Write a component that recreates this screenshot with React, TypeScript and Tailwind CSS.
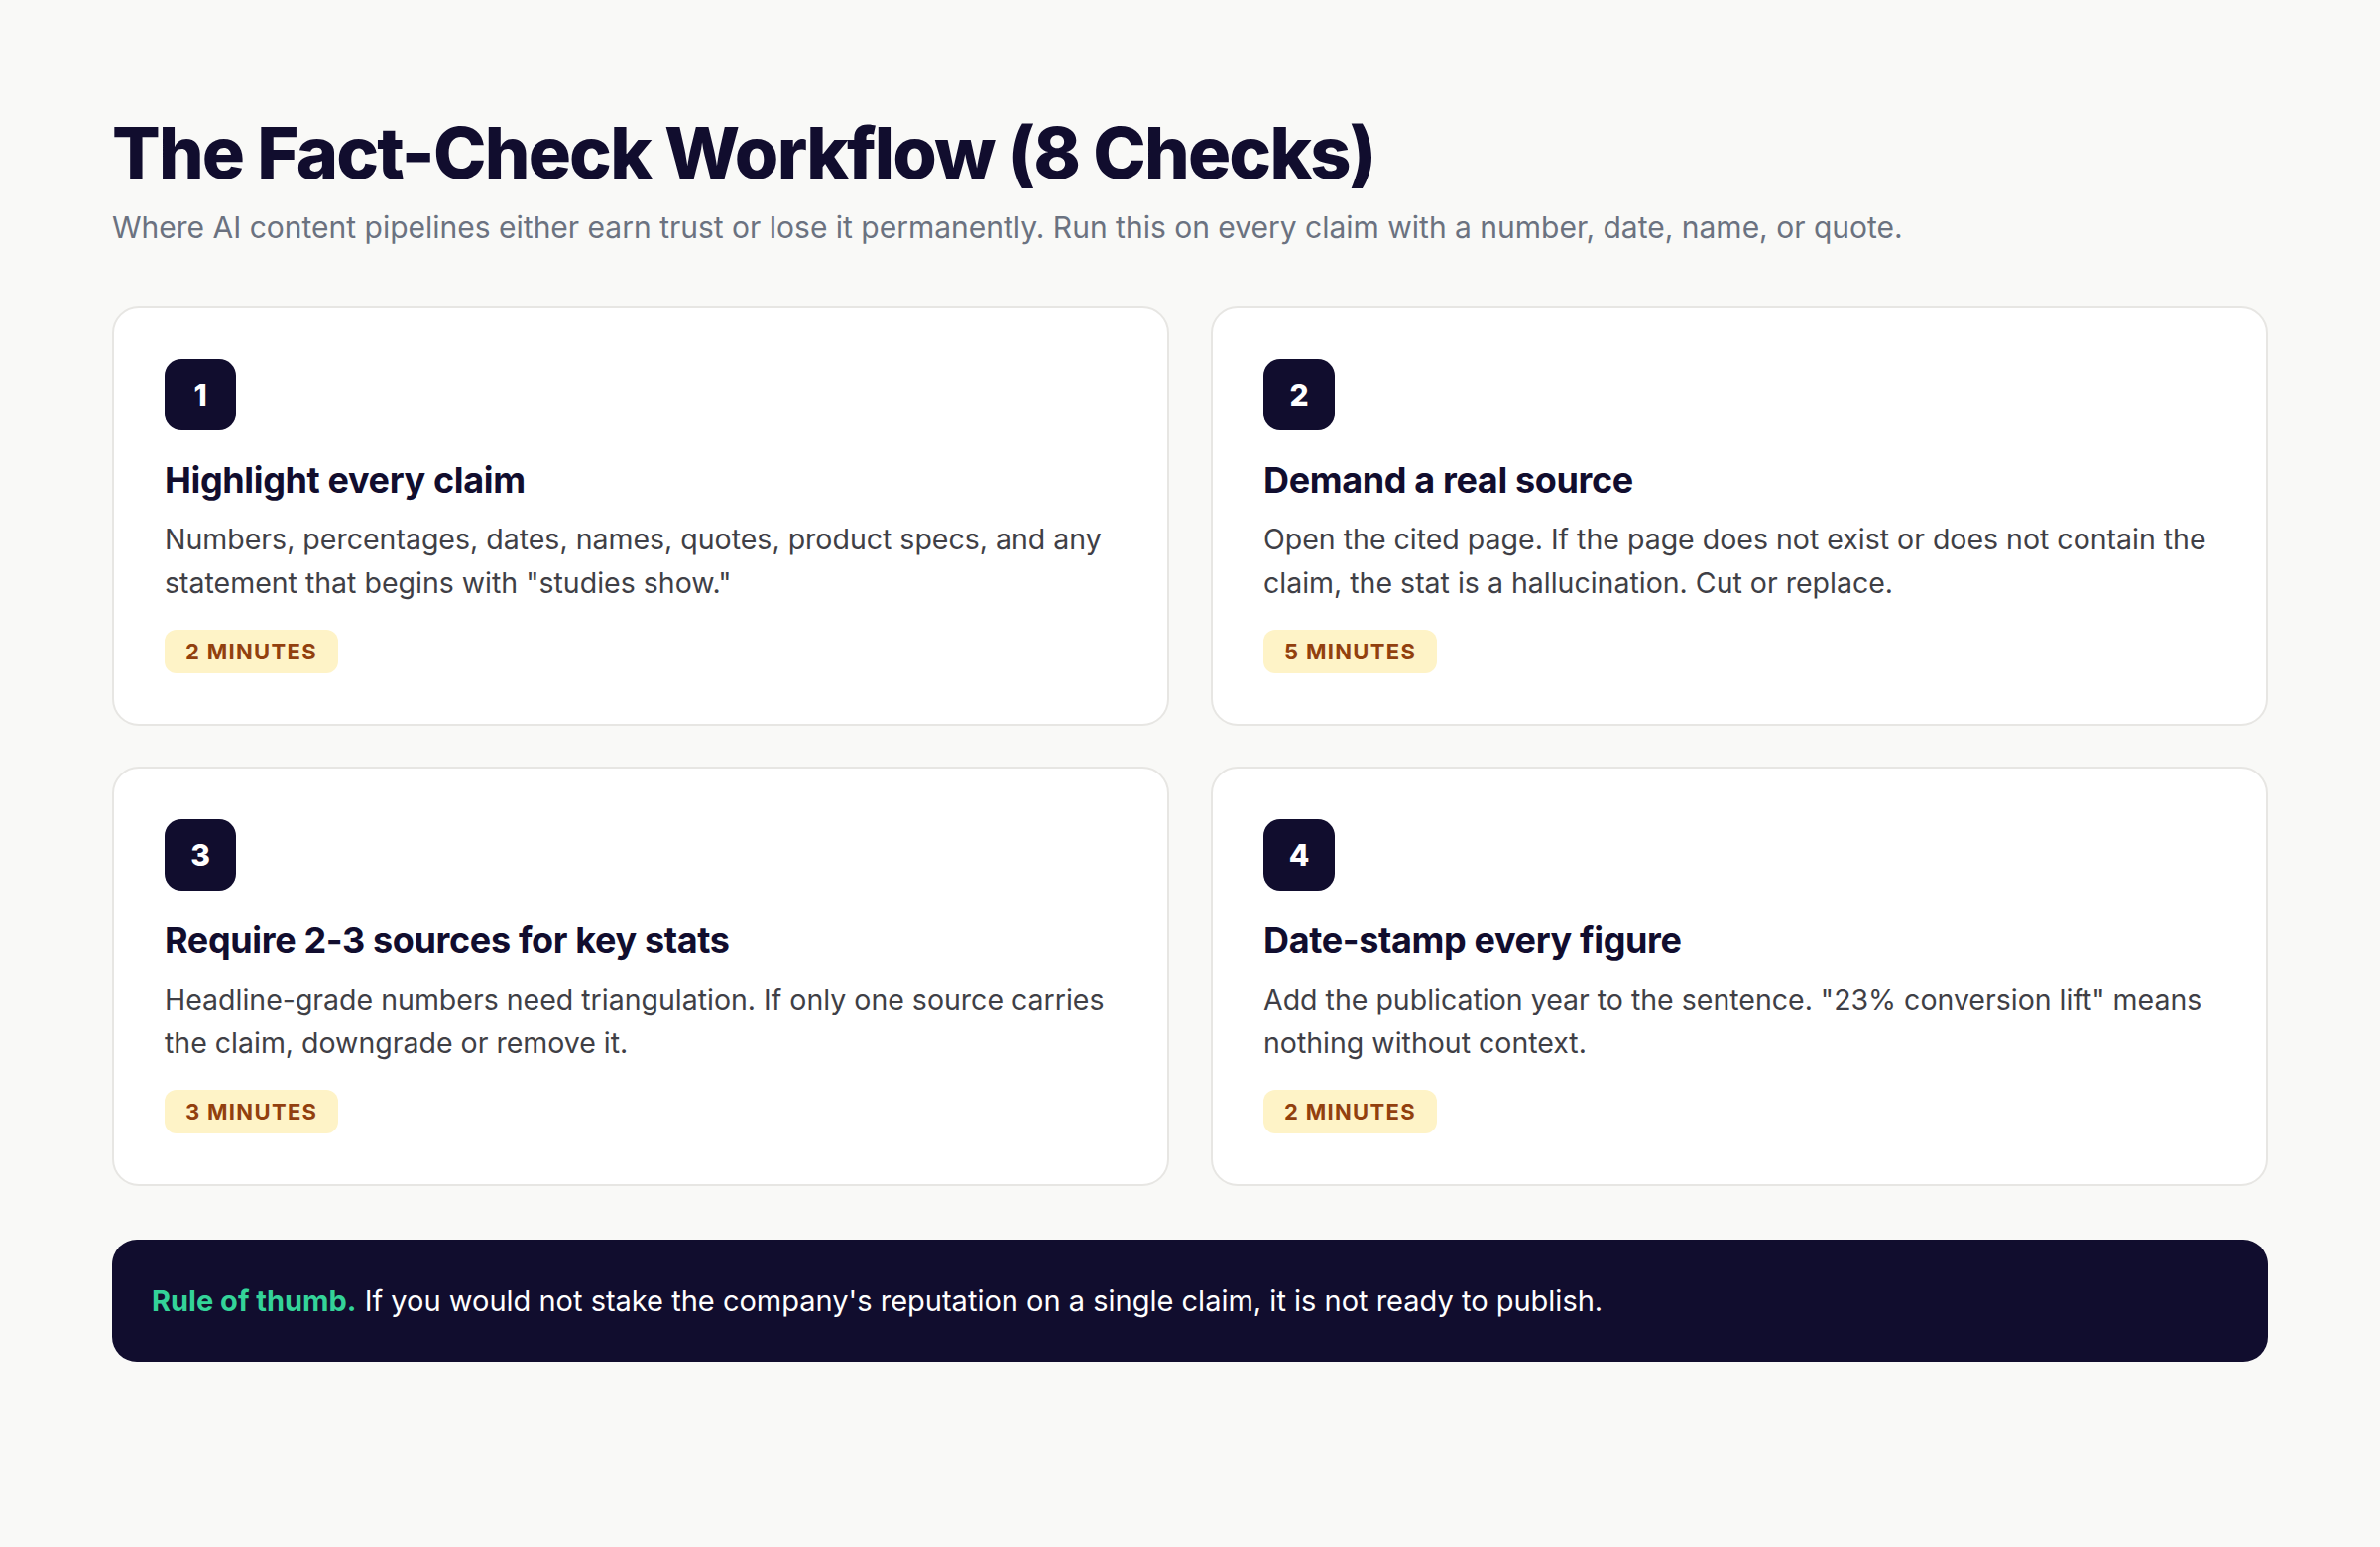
import React from 'react';

const CHECKS = [
  {
    n: '1',
    title: 'Highlight every claim',
    body: 'Numbers, percentages, dates, names, quotes, product specs, and any statement that begins with "studies show."',
    time: '2 MINUTES',
  },
  {
    n: '2',
    title: 'Demand a real source',
    body: 'Open the cited page. If the page does not exist or does not contain the claim, the stat is a hallucination. Cut or replace.',
    time: '5 MINUTES',
  },
  {
    n: '3',
    title: 'Require 2-3 sources for key stats',
    body: 'Headline-grade numbers need triangulation. If only one source carries the claim, downgrade or remove it.',
    time: '3 MINUTES',
  },
  {
    n: '4',
    title: 'Date-stamp every figure',
    body: 'Add the publication year to the sentence. "23% conversion lift" means nothing without context.',
    time: '2 MINUTES',
  },
];

function CheckCard({ n, title, body, time }: { n: string; title: string; body: string; time: string }) {
  return (
    <div className="flex flex-col items-start rounded-[27px] border-2 border-[#e7e6e3] bg-white p-[51px]">
      <div className="flex h-[72px] w-[72px] items-center justify-center rounded-[17px] bg-[#110d2e] text-[30px] font-extrabold text-white">
        {n}
      </div>
      <h2 className="mt-[27px] text-[36px] leading-[47px] font-bold tracking-[-0.01em] text-[#110d2e]">{title}</h2>
      <p className="mt-[14px] text-[28.5px] leading-[44px] text-[#3f3f46]">{body}</p>
      <span className="mt-[25px] flex h-[44px] items-center rounded-[12px] bg-[#fef3c7] px-[21px] text-[22px] font-bold tracking-[0.06em] text-[#92400e]">
        {time}
      </span>
    </div>
  );
}

export default function App() {
  return (
    <div
      className="min-h-screen bg-[#f9f9f7] px-[113px] pt-[114px] pb-[113px]"
      style={{ fontFamily: 'Inter, "Noto Sans", sans-serif' }}
    >
      <h1 className="text-[72px] leading-[80px] font-extrabold tracking-[-0.025em] text-[#110d2e]">
        The Fact-Check Workflow (8 Checks)
      </h1>
      <p className="mt-[13px] text-[30px] leading-[45px] text-[#6b7280]">
        Where AI content pipelines either earn trust or lose it permanently. Run this on every claim with a number, date, name, or quote.
      </p>

      {/* checks grid */}
      <div className="mt-[57px] grid grid-cols-2 gap-x-[42px] gap-y-[41px]">
        {CHECKS.map(c => (
          <CheckCard key={c.n} {...c} />
        ))}
      </div>

      {/* rule of thumb banner */}
      <div className="mt-[54px] rounded-[25px] bg-[#110d2e] px-[40px] py-[40px] text-[29px] leading-[43px] text-white">
        <span className="font-bold text-[#34d399]">Rule of thumb.</span> If you would not stake the company's reputation on a single claim, it is not ready to publish.
      </div>
    </div>
  );
}
